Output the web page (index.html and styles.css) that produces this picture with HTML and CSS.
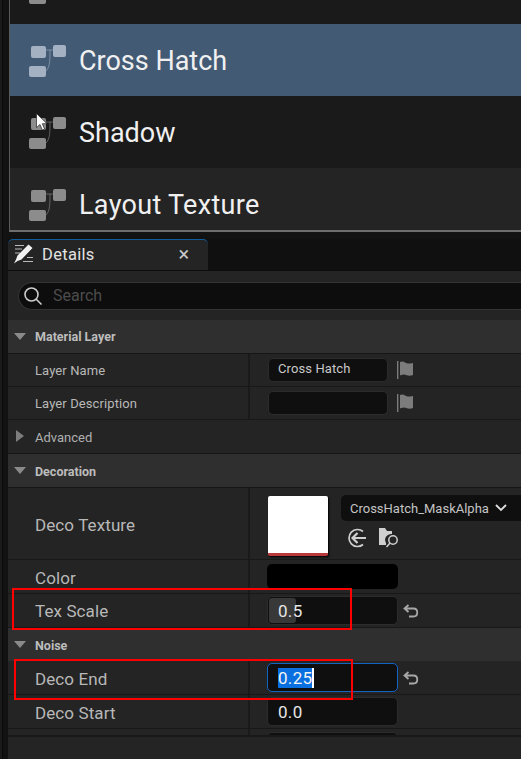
FILE: index.html
```html
<!DOCTYPE html>
<html lang="en">
<head>
    <meta charset="UTF-8">
    <title>Details</title>
    <meta name="viewport" content="width=device-width, initial-scale=1.0">
    <link rel="stylesheet" href="styles.css">
</head>
<body>
    <svg class="icon-defs" width="0" height="0">
        <symbol id="layer" viewBox="0 0 37 32">
            <rect x="2" y="1" width="15" height="12" rx="2"/>
            <rect x="24" y="0" width="13" height="12" rx="2"/>
            <rect x="0" y="21" width="17" height="11" rx="2"/>
            <path d="M17 5h7M21 5c0 10 0 17-4 21" fill="none" stroke="currentColor" stroke-width="1" opacity=".6"/>
        </symbol>
        <symbol id="flag" viewBox="0 0 18 20">
            <path d="M0 1h1.400v18H0z"/>
            <path d="M3 2c4-2 5 2 9 1.500 2 0 4-.5 4-.5v12c-4 1.500-6 0-9-.5-2 0-4 1-4 1z"/>
        </symbol>
        <symbol id="reset" viewBox="0 0 16 14">
            <path d="M5.500 1 1.500 4.500 5.500 8M1.500 4.500h9c5 0 5 8 0 8H6" fill="none" stroke="currentColor" stroke-width="1.800"/>
        </symbol>
    </svg>

    <div class="asset-list">
        <div class="asset-row row-cut"><svg class="layer-icon"><use href="#layer"/></svg></div>
        <div class="asset-row selected"><svg class="layer-icon"><use href="#layer"/></svg><span>Cross Hatch</span></div>
        <div class="asset-row"><svg class="layer-icon"><use href="#layer"/></svg><span>Shadow</span></div>
        <div class="asset-row alt"><svg class="layer-icon"><use href="#layer"/></svg><span>Layout Texture</span></div>
    </div>

    <div class="details">
        <div class="tab-bar">
            <div class="tab">
                <svg class="tab-icon" viewBox="0 0 20 20">
                    <path d="M1 1.500h9M1 5h7M1 9h5M9 17.500h10M13 13.500h6" fill="none" stroke="#bbb" stroke-width="1"/>
                    <path d="M14.500.5 18.500 4 7.500 15.500l-4 1.500L0 19.500l2-4L3.500 11.500z" fill="#f2f2f2"/>
                </svg>
                <span class="tab-title">Details</span>
                <span class="tab-close">×</span>
            </div>
        </div>

        <div class="search-row">
            <div class="search-box">
                <svg class="search-icon" viewBox="0 0 20 20">
                    <circle cx="8.500" cy="8.500" r="6.500" fill="none" stroke="#ccc" stroke-width="1.600"/>
                    <path d="M13 13l5.500 5.500" stroke="#ccc" stroke-width="1.600"/>
                </svg>
                <span>Search</span>
            </div>
        </div>

        <div class="section-head"><i class="arrow-down"></i>Material Layer</div>
        <div class="prop small">
            <div class="prop-name">Layer Name</div>
            <div class="prop-value">
                <div class="text-box">Cross Hatch</div>
                <svg class="flag"><use href="#flag"/></svg>
            </div>
        </div>
        <div class="prop small">
            <div class="prop-name">Layer Description</div>
            <div class="prop-value">
                <div class="text-box"></div>
                <svg class="flag"><use href="#flag"/></svg>
            </div>
        </div>
        <div class="advanced"><i class="arrow-right"></i>Advanced</div>

        <div class="section-head lower"><i class="arrow-down"></i>Decoration</div>
        <div class="prop texture">
            <div class="prop-name">Deco Texture</div>
            <div class="prop-value">
                <div class="thumb"></div>
                <div class="texture-side">
                    <div class="combo">CrossHatch_MaskAlpha
                        <svg class="chevron" viewBox="0 0 12 8"><path d="M1 1l5 5 5-5" fill="none" stroke="#ddd" stroke-width="1.800"/></svg>
                    </div>
                    <div class="texture-tools">
                        <svg class="tool" viewBox="0 0 20 20">
                            <path d="M16 3.500A8.500 8.500 0 1 0 16 16.500" fill="none" stroke="#cfcfcf" stroke-width="1.700"/>
                            <path d="M10.500 5l-5 5 5 5M5.500 10H19" fill="none" stroke="#cfcfcf" stroke-width="2.200"/>
                        </svg>
                        <svg class="tool" viewBox="0 0 20 20">
                            <path d="M0 0h6l2 3h5v3a6 6 0 0 0-6 9v2H0z" fill="#cfcfcf"/>
                            <circle cx="14" cy="12" r="4.200" fill="none" stroke="#cfcfcf" stroke-width="1.500"/>
                            <path d="M11 15l-3.500 4" stroke="#cfcfcf" stroke-width="1.500"/>
                        </svg>
                    </div>
                </div>
            </div>
        </div>
        <div class="prop">
            <div class="prop-name">Color</div>
            <div class="prop-value"><div class="color-box"></div></div>
        </div>
        <div class="prop">
            <div class="prop-name scale-name">Tex Scale</div>
            <div class="prop-value">
                <div class="num-box"><i class="slider"></i><span>0.5</span></div>
                <svg class="reset"><use href="#reset"/></svg>
            </div>
        </div>

        <div class="section-head thin"><i class="arrow-down"></i>Noise</div>
        <div class="prop">
            <div class="prop-name">Deco End</div>
            <div class="prop-value">
                <div class="num-box focus"><span class="sel">0.25</span><i class="caret"></i></div>
                <svg class="reset"><use href="#reset"/></svg>
            </div>
        </div>
        <div class="prop">
            <div class="prop-name">Deco Start</div>
            <div class="prop-value"><div class="num-box"><span>0.0</span></div></div>
        </div>
        <div class="prop cut">
            <div class="prop-name"></div>
            <div class="prop-value"><div class="num-box"></div></div>
        </div>
    </div>

    <div class="mark mark-a"></div>
    <div class="mark mark-b"></div>

    <svg class="cursor" viewBox="0 0 12 18">
        <path d="M.5.500v14l3.500-3 2.300 5.500 2.300-1-2.300-5.300h4.700z" fill="#fff" stroke="#222" stroke-width=".7"/>
    </svg>
</body>
</html>
```

FILE: styles.css
```css
html, body {
    margin: 0;
    height: 759px;
    overflow: hidden;
}
body {
    position: relative;
    width: 521px;
    background: linear-gradient(90deg, #1a1a1a 2px, #0a0a0a 2px, #0a0a0a 3px, #121212 3px);
    font-family: Roboto, sans-serif;
    color: #c4c4c4;
}
.icon-defs {
    display: block;
    height: 0;
}

/* top list */
.asset-list {
    height: 230px;
    margin-left: 9px;
    border-left: 1px solid #5a5a5a;
    border-bottom: 2px solid #6e6e6e;
    overflow: hidden;
}
.asset-row {
    height: 72px;
    display: flex;
    align-items: center;
    background-color: #1a1a1a;
    color: #8c8c8c;
    font-size: 27px;
    padding-top: 1px;
    box-sizing: border-box;
}
.asset-row span {
    color: #f0f0f0;
    margin-left: 13px;
}
.row-cut {
    height: 24px;
    padding-top: 0;
    align-items: flex-start;
    overflow: hidden;
}
.row-cut .layer-icon {
    margin-top: -28px;
}
.selected {
    background-color: #425a74;
    color: #a3b1c2;
}
.alt {
    background-color: #242424;
}
.alt span {
    letter-spacing: .3px;
}
.layer-icon {
    width: 37px;
    height: 32px;
    margin-left: 19px;
    fill: currentColor;
    flex-shrink: 0;
}

/* details panel */
.details {
    margin: 7px 0 0 8px;
    height: 520px;
    background-color: #242424;
}
.tab-bar {
    height: 31px;
    background-color: #101010;
    border-bottom: 1px solid #0c0c0c;
}
.tab {
    width: 200px;
    height: 31px;
    box-sizing: border-box;
    display: flex;
    align-items: center;
    padding-bottom: 2px;
    background-color: #242424;
    border-top: 1px solid #0f5c9c;
    border-radius: 5px 5px 0 0;
}
.tab-icon {
    width: 20px;
    height: 20px;
    margin-left: 6px;
}
.tab-title {
    margin-left: 8px;
    font-size: 16.500px;
    color: #e2e2e2;
    letter-spacing: .3px;
}
.tab-close {
    margin-left: 84px;
    font-size: 20px;
    color: #c8c8c8;
}
.search-row {
    height: 49px;
    padding-top: 11px;
    box-sizing: border-box;
}
.search-box {
    height: 28px;
    margin-left: 10px;
    padding-bottom: 2px;
    box-sizing: border-box;
    display: flex;
    align-items: center;
    background-color: #0d0d0d;
    border: 1px solid #333;
    border-right: 0;
    border-radius: 14px 0 0 14px;
    font-size: 16px;
    color: #4c4c4c;
}
.search-icon {
    width: 20px;
    height: 20px;
    margin: 2px 10px 0 4px;
}
.section-head {
    height: 34px;
    display: flex;
    align-items: center;
    padding-left: 27px;
    position: relative;
    background-color: #2f2f2f;
    border-bottom: 1px solid #161616;
    box-sizing: border-box;
    font-size: 12.500px;
    font-weight: 700;
    color: #bdbdbd;
}
.section-head.lower {
    padding-top: 2px;
}
.section-head.thin {
    height: 33px;
    padding-top: 1px;
    border-bottom: 0;
}
.arrow-down {
    position: absolute;
    left: 6px;
    top: 13px;
    border-style: solid;
    border-width: 7px 6px 0;
    border-color: #8a8a8a transparent transparent;
}
.arrow-right {
    position: absolute;
    left: 8px;
    top: 10px;
    border-style: solid;
    border-width: 6px 0 6px 8px;
    border-color: transparent transparent transparent #7d7d7d;
}
.advanced {
    height: 31px;
    padding: 2px 0 0 27px;
    position: relative;
    display: flex;
    align-items: center;
    border-bottom: 1px solid #161616;
    font-size: 13px;
    color: #b0b0b0;
}
.prop {
    height: 34px;
    box-sizing: border-box;
    display: flex;
    border-bottom: 1px solid #181818;
    font-size: 17px;
    letter-spacing: .1px;
}
.prop.small {
    height: 33px;
    font-size: 13px;
}
.prop-name {
    width: 242px;
    box-sizing: border-box;
    padding: 2px 0 0 27px;
    display: flex;
    align-items: center;
    border-right: 2px solid #1a1a1a;
    color: #b8b8b8;
}
.small .prop-name,
.scale-name {
    padding-top: 0;
}
.prop-value {
    flex: 1;
    display: flex;
    align-items: center;
    padding-left: 18px;
}
.text-box {
    width: 120px;
    height: 24px;
    box-sizing: border-box;
    padding: 0 9px 4px;
    display: flex;
    align-items: center;
    background-color: #0f0f0f;
    border: 1px solid #2c2c2c;
    border-radius: 5px;
    font-size: 13px;
    color: #c8c8c8;
}
.flag {
    width: 18px;
    height: 20px;
    margin-left: 9px;
    fill: #7c7c7c;
}
.texture {
    height: 72px;
}
.thumb {
    width: 60px;
    height: 60px;
    margin-top: 4px;
    box-sizing: border-box;
    background-color: #fff;
    border-bottom: 3px solid #b8383c;
    border-radius: 2px;
    box-shadow: 1px 1px 2px #000;
}
.texture-side {
    margin-left: 13px;
    align-self: flex-start;
    padding-top: 7px;
}
.combo {
    width: 180px;
    height: 26px;
    box-sizing: border-box;
    padding-left: 9px;
    display: flex;
    align-items: center;
    background-color: #0f0f0f;
    border-radius: 5px 0 0 5px;
    font-size: 13px;
    letter-spacing: 0;
    color: #c4c4c4;
    white-space: nowrap;
}
.chevron {
    width: 12px;
    height: 8px;
    margin-left: 6px;
    flex-shrink: 0;
}
.texture-tools {
    display: flex;
    gap: 12px;
    margin-top: 7px;
    padding-left: 6px;
}
.tool {
    width: 20px;
    height: 20px;
}
.color-box {
    width: 131px;
    height: 25px;
    margin-left: -1px;
    background-color: #000;
    border-radius: 5px;
}
.num-box {
    position: relative;
    width: 131px;
    height: 29px;
    margin-left: -1px;
    box-sizing: border-box;
    padding-left: 10px;
    display: flex;
    align-items: center;
    background-color: #0f0f0f;
    border: 1px solid #2c2c2c;
    border-radius: 5px;
    font-size: 17px;
    letter-spacing: .3px;
    color: #e6e6e6;
}
.num-box span {
    position: relative;
}
.slider {
    position: absolute;
    left: 1px;
    top: 1px;
    width: 27px;
    height: 25px;
    background-color: #383838;
    border-radius: 3px;
}
.focus {
    border-color: #1166c4;
}
.sel {
    background-color: #0a70e0;
    color: #f4f4f4;
    line-height: 20px;
}
.caret {
    width: 2px;
    height: 20px;
    background-color: #fff;
}
.reset {
    width: 16px;
    height: 14px;
    margin-left: 5px;
    color: #a8a8a8;
}
.cut {
    height: 6px;
    border-bottom: 0;
    box-shadow: 0 2px 0 #181818;
}
.cut .prop-value {
    align-items: flex-start;
    overflow: hidden;
    margin-left: -1px;
    padding: 3px 0 0 19px;
}

/* red annotation boxes and mouse pointer sit over the screenshot */
.mark {
    position: absolute;
    box-sizing: border-box;
    border: 2px solid #f00;
}
.mark-a {
    left: 12px;
    top: 588px;
    width: 340px;
    height: 42px;
}
.mark-b {
    left: 14px;
    top: 659px;
    width: 339px;
    height: 41px;
}
.cursor {
    position: absolute;
    left: 36px;
    top: 113px;
    width: 12px;
    height: 18px;
}
```
